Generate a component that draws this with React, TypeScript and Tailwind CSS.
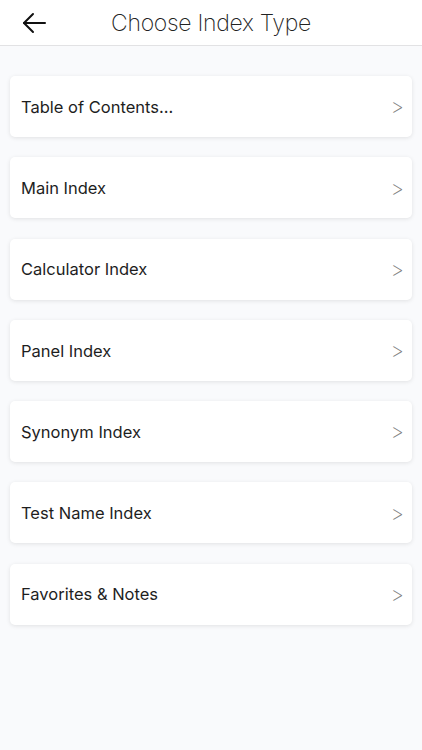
import React from "react";

const items = [
  "Table of Contents...",
  "Main Index",
  "Calculator Index",
  "Panel Index",
  "Synonym Index",
  "Test Name Index",
  "Favorites & Notes",
];

export default function App() {
  return (
    <div className="w-[422px] h-[750px] bg-[#f9fafc] flex flex-col" style={{ fontFamily: "Inter, 'Liberation Sans', sans-serif" }}>
      <div className="h-[46px] bg-white border-b border-[#e2e2e4] flex items-center relative shrink-0">
        <div className="absolute left-[22px] top-[12px]">
          <svg width="24" height="22" viewBox="0 0 24 22" fill="none" stroke="#111" strokeWidth="2" strokeLinecap="round" strokeLinejoin="round">
            <path d="M23 11H2" />
            <path d="M11 2L2 11L11 20" />
          </svg>
        </div>
        <div className="flex-1 text-center text-[23px] font-extralight text-[#222] tracking-[-0.3px] pt-[2px]">Choose Index Type</div>
      </div>
      <div className="flex flex-col gap-[20.3px] px-[10px] pt-[30px]">
        {items.map((t) => (
          <div key={t} className="h-[61px] bg-white rounded-[5px] shadow-[0_1px_4px_rgba(0,0,0,0.10)] flex items-center justify-between pl-[11px] pr-[8px]">
            <span className="text-[16.5px] font-[380] text-[#1e1e1e] pt-[1px]">{t}</span>
            <span className="text-[21px] text-[#808080] font-extralight pt-[1px]">&gt;</span>
          </div>
        ))}
      </div>
    </div>
  );
}
